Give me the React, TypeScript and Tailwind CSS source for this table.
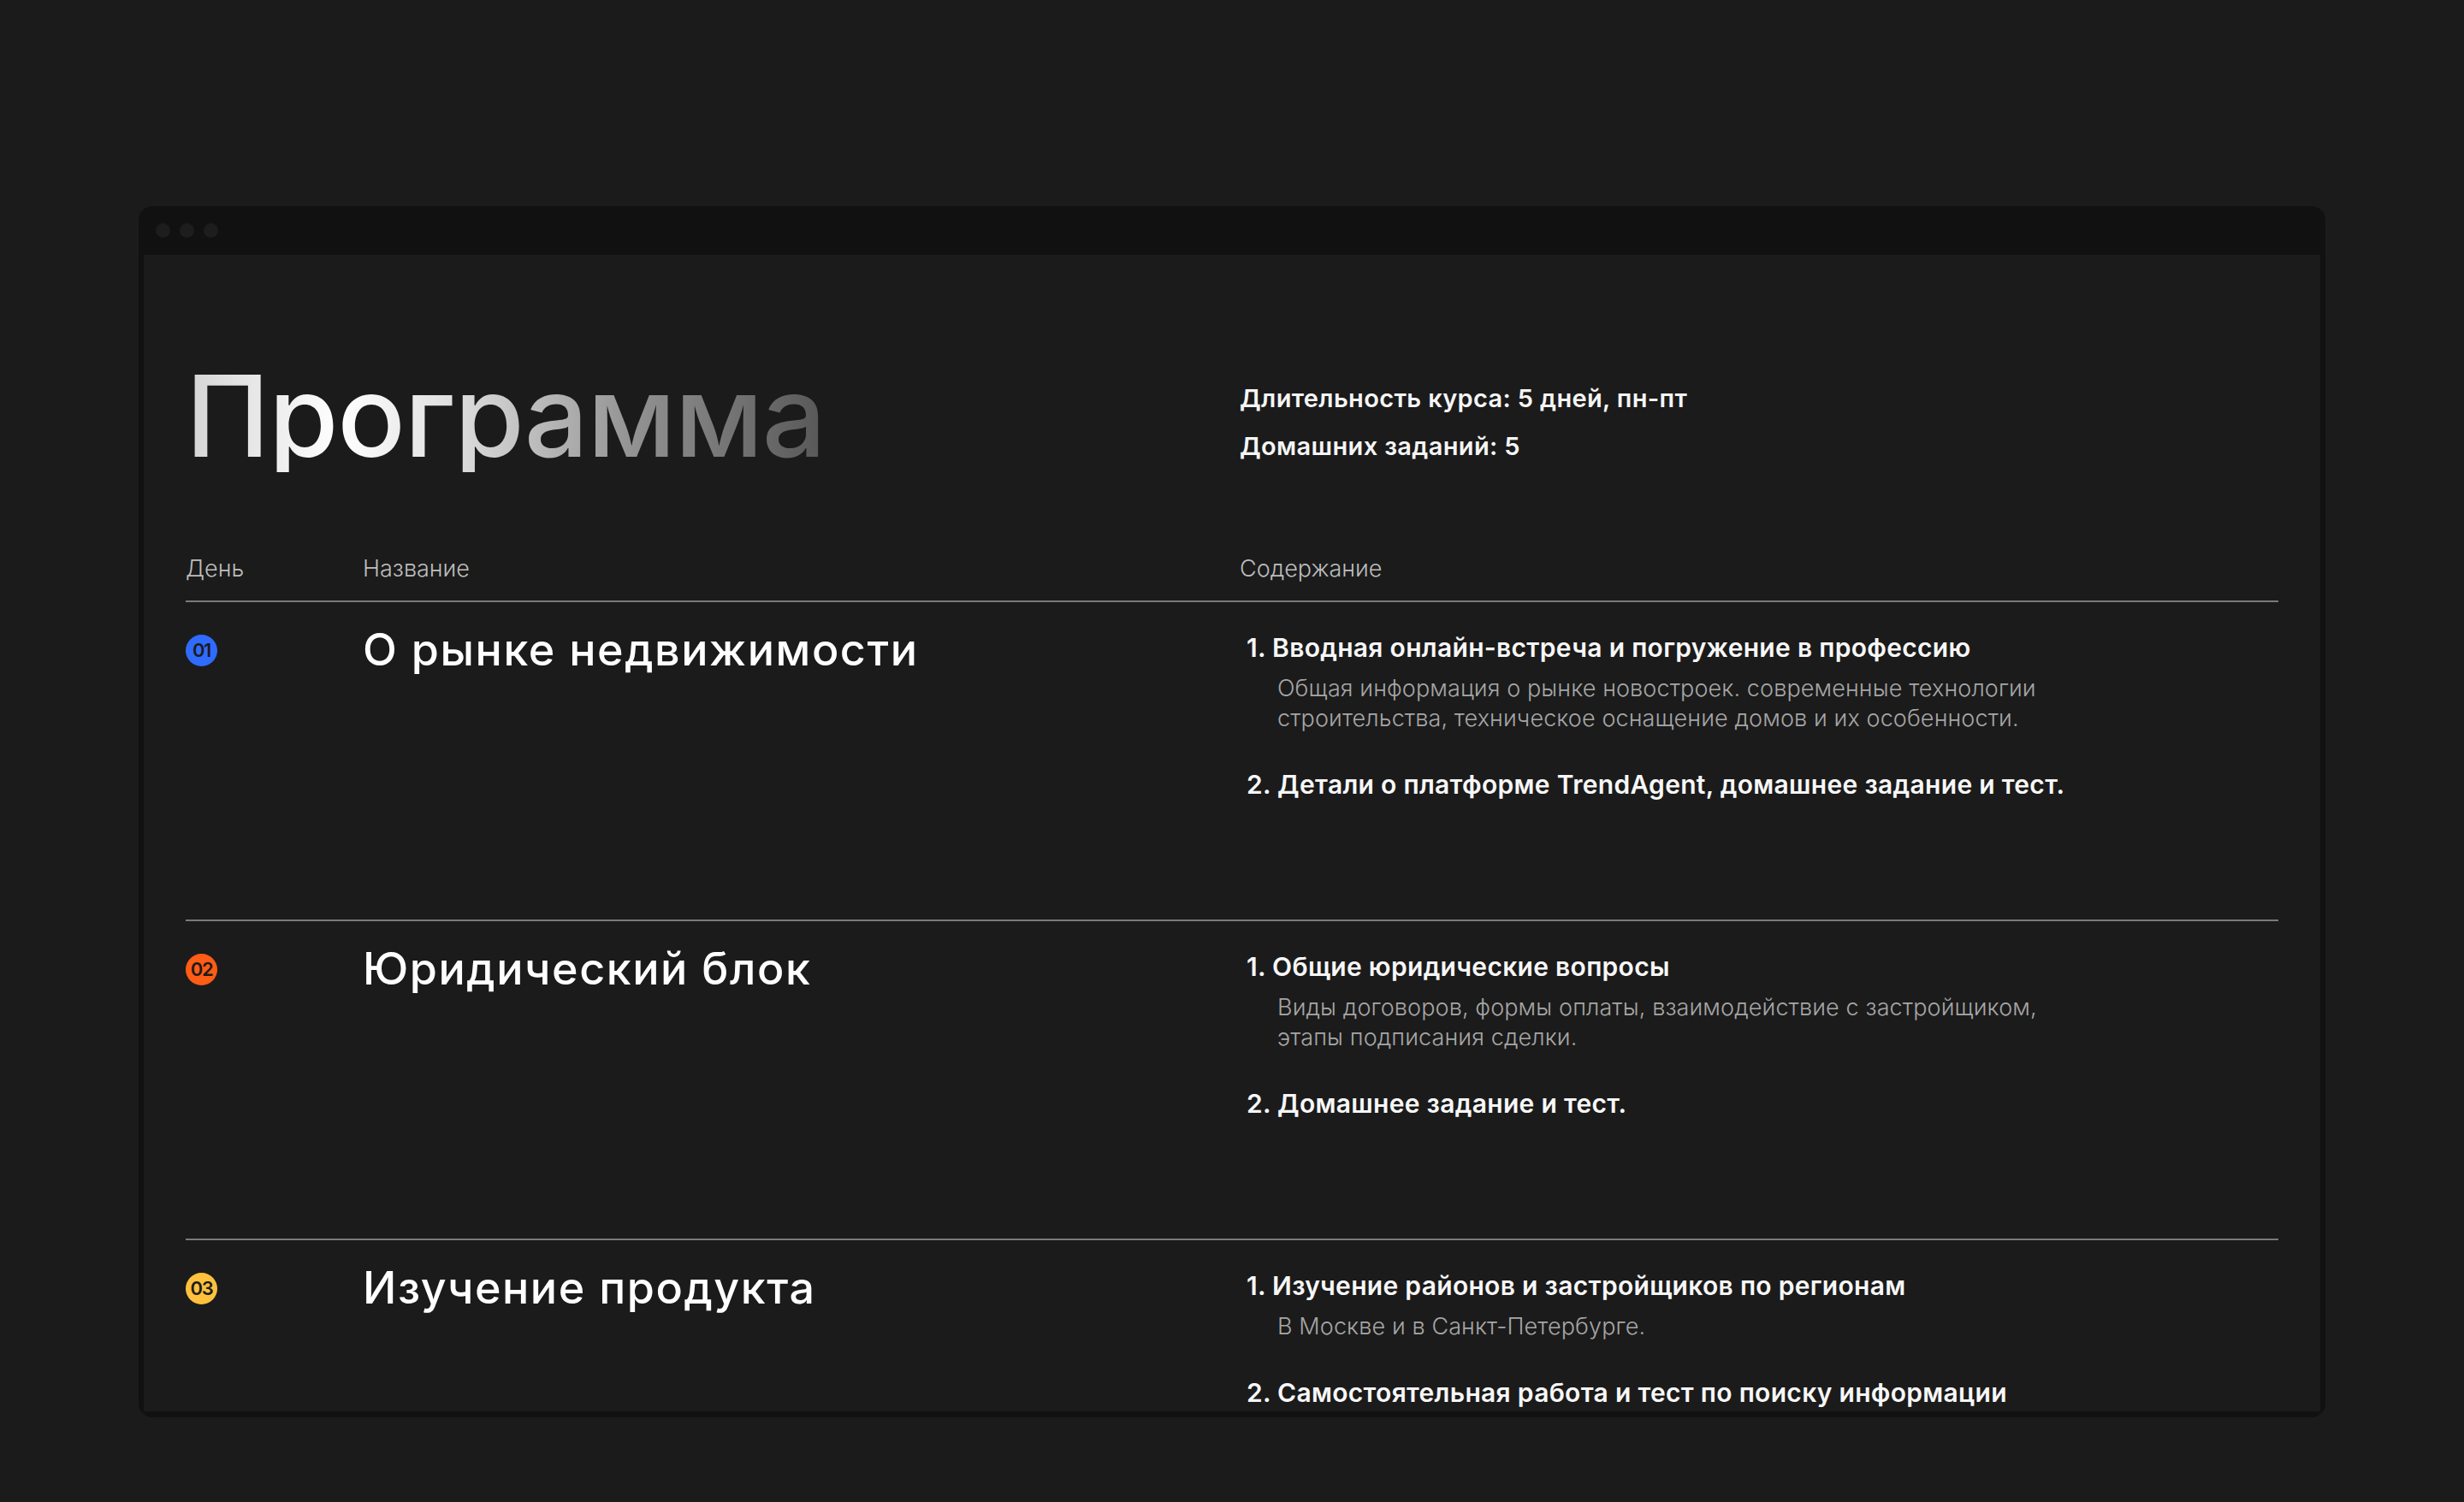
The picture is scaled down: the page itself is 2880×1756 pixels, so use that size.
import React from "react";

type Item = { title: string; sub?: string[] };
type Row = { n: string; color: string; title: string; items: Item[] };

const rows: Row[] = [
  {
    n: "01",
    color: "bg-[#2f6bff]",
    title: "О рынке недвижимости",
    items: [
      {
        title: "1. Вводная онлайн-встреча и погружение в профессию",
        sub: [
          "Общая информация о рынке новостроек. современные технологии",
          "строительства, техническое оснащение домов и их особенности.",
        ],
      },
      { title: "2. Детали о платформе TrendAgent, домашнее задание и тест." },
    ],
  },
  {
    n: "02",
    color: "bg-[#ff5c16]",
    title: "Юридический блок",
    items: [
      {
        title: "1. Общие юридические вопросы",
        sub: [
          "Виды договоров, формы оплаты, взаимодействие с застройщиком,",
          "этапы подписания сделки.",
        ],
      },
      { title: "2. Домашнее задание и тест." },
    ],
  },
  {
    n: "03",
    color: "bg-[#ffc13d]",
    title: "Изучение продукта",
    items: [
      {
        title: "1. Изучение районов и застройщиков по регионам",
        sub: ["В Москве и в Санкт-Петербурге."],
      },
      {
        title: "2. Самостоятельная работа и тест по поиску информации",
      },
    ],
  },
];

export default function App() {
  return (
    <div
      className="min-h-[1756px] bg-[#1b1b1b] pt-[241px] px-[162px] text-white"
      style={{ fontFamily: "Inter, 'Noto Sans', sans-serif" }}
    >
      <div className="h-[1416px] rounded-[16px] bg-[#111111] px-[6px] pb-[7px] flex flex-col">
        <div className="h-[57px] shrink-0 flex items-center gap-[11px] pl-[14px]">
          <span className="w-[17px] h-[17px] rounded-full bg-[#1d1d1d]" />
          <span className="w-[17px] h-[17px] rounded-full bg-[#1d1d1d]" />
          <span className="w-[17px] h-[17px] rounded-full bg-[#1d1d1d]" />
        </div>
        <div className="flex-1 overflow-hidden bg-[#1b1b1b] px-[49px] pt-[122px]">
          <div className="grid grid-cols-[1232px_1fr]">
            <div>
              <h1 className="inline-block text-[132px] leading-none font-medium tracking-[-0.01em] bg-[linear-gradient(90deg,#d4d4d4_0%,#ffffff_24%,#dedede_42%,#929292_70%,#575757_100%)] bg-clip-text text-transparent">
                Программа
              </h1>
            </div>
            <div className="pt-[18px] text-[29px] leading-[56px] font-semibold tracking-[0.012em] text-[#f5f5f5]">
              <div>Длительность курса: 5 дней, пн-пт</div>
              <div>Домашних заданий: 5</div>
            </div>
          </div>

          <div className="mt-[95px] grid grid-cols-[207px_1025px_1fr] text-[27px] leading-[36px] font-light text-[#bdbdbd] pb-[19px]">
            <div>День</div>
            <div>Название</div>
            <div>Содержание</div>
          </div>

          {rows.map((r) => (
            <div
              key={r.n}
              className="h-[373px] border-t-2 border-[#7a7a7a] grid grid-cols-[207px_1025px_1fr]"
            >
              <div className="pt-[38px]">
                <div
                  className={`w-[37px] h-[37px] rounded-full ${r.color} flex items-center justify-center text-[22px] font-semibold text-[#1b1b1b] tracking-[-0.06em]`}
                >
                  {r.n}
                </div>
              </div>
              <div className="pt-[28px] text-[52px] leading-[56px] font-medium tracking-[0.03em] text-white">
                {r.title}
              </div>
              <div className="pt-[33px] pl-[8px]">
                {r.items.map((it, i) => (
                  <div key={i} className={i > 0 ? "mt-[40px]" : ""}>
                    <div className="text-[30px] leading-[40px] font-semibold tracking-[0.01em] text-[#f7f7f7]">
                      {it.title}
                    </div>
                    {it.sub && (
                      <div className="mt-[10px] pl-[36px] text-[27px] leading-[35px] font-light tracking-[0.004em] text-[#a6a6a6]">
                        {it.sub.map((s, j) => (
                          <div key={j}>{s}</div>
                        ))}
                      </div>
                    )}
                  </div>
                ))}
              </div>
            </div>
          ))}
        </div>
      </div>
    </div>
  );
}
